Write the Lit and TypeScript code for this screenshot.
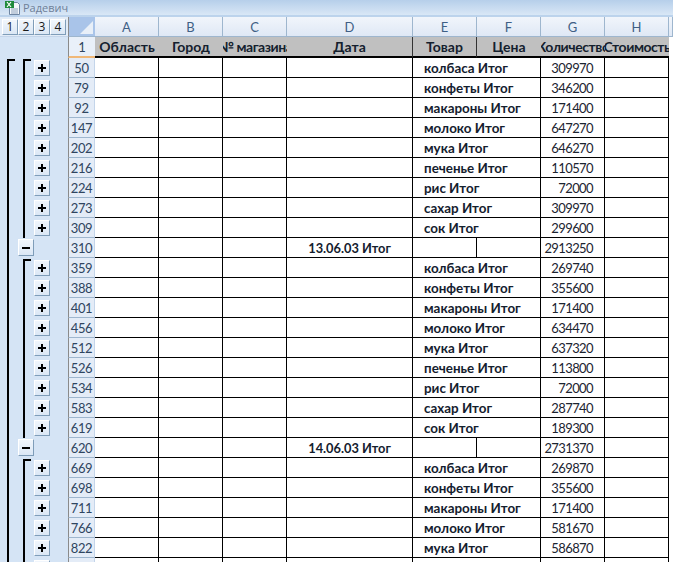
import { LitElement, html, css } from "lit";
import { customElement } from "lit/decorators.js";

type Row = { n: number | ""; item?: string; date?: string; val?: string; first?: boolean };

const items = ["колбаса", "конфеты", "макароны", "молоко", "мука", "печенье", "рис", "сахар", "сок"];
const group = (nums: number[], vals: string[]): Row[] =>
  nums.map((n, i) => ({ n, item: `${items[i]} Итог`, val: vals[i], first: i === 0 }));

const rows: Row[] = [
  ...group([50, 79, 92, 147, 202, 216, 224, 273, 309], ["309970", "346200", "171400", "647270", "646270", "110570", "72000", "309970", "299600"]),
  { n: 310, date: "13.06.03 Итог", val: "2913250" },
  ...group([359, 388, 401, 456, 512, 526, 534, 583, 619], ["269740", "355600", "171400", "634470", "637320", "113800", "72000", "287740", "189300"]),
  { n: 620, date: "14.06.03 Итог", val: "2731370" },
  ...group([669, 698, 711, 766, 822], ["269870", "355600", "171400", "581670", "586870"]),
  { n: "" },
];

const cols = ["A", "B", "C", "D", "E", "F", "G", "H"];
const heads = ["Область", "Город", "№ магазина", "Дата", "Товар", "Цена", "Количество", "Стоимость"];

@customElement("app-root")
export class AppRoot extends LitElement {
  static styles = css`
    :host {
      display: block;
      width: 673px;
      height: 562px;
      overflow: hidden;
      background: #fff;
      font-family: "Lato", "Liberation Sans", sans-serif;
      color: #000;
    }
    .title {
      height: 15px;
      display: flex;
      align-items: center;
      gap: 3px;
      padding-left: 5px;
      background: linear-gradient(#b6cfea, #d9e7f6);
      border-bottom: 2px solid #bcd3ec;
      font: 11px "Open Sans", sans-serif;
      color: #6f8098;
    }
    .title svg { flex: none; margin-top: 1px; }
    .row {
      display: grid;
      grid-template-columns: 68px 27px 64px 64px 64px 126px 64px 64px 64px 64px 4px;
      height: 20px;
    }
    .gutter {
      display: grid;
      grid-template-columns: 7px 11px 5px 11px 16px 18px;
      height: 20px;
      background: #d5e4f5;
    }
    .l1, .l2 {
      grid-row: 1;
      border-left: 2px solid #000;
      box-sizing: border-box;
      height: 20px;
    }
    .l1 { grid-column: 2; }
    .l2 { grid-column: 4; }
    .first { position: relative; height: 19px; margin-top: 1px; }
    .first::after {
      content: "";
      position: absolute;
      left: 0;
      top: 0;
      width: 6px;
      height: 2px;
      background: #000;
    }
    .btn {
      box-sizing: border-box;
      background: linear-gradient(#f1f6fc, #dbe7f5);
      border: 1px solid #fff;
      border-right-color: #7f9db9;
      border-bottom-color: #7f9db9;
      display: flex;
      align-items: center;
      justify-content: center;
      line-height: 1;
    }
    .plus { grid-column: 5; grid-row: 1; width: 16px; height: 16px; margin-top: 2px; }
    .minus { grid-column: 3 / 5; grid-row: 1; width: 16px; height: 17px; margin-top: 1px; }
    .plus svg, .minus svg { display: block; }
    .rh {
      box-sizing: border-box;
      border-left: 1px solid #8a8a8a;
      border-right: 1px solid #c4d5ea;
      border-bottom: 1px solid #9eb6ce;
      background: #e4ecf7;
      color: #2f4560;
      font-size: 13px;
      letter-spacing: -0.4px;
      display: flex;
      align-items: center;
      justify-content: center;
    }
    .c {
      box-sizing: border-box;
      border-right: 1px solid #000;
      border-bottom: 1px solid #000;
      display: flex;
      align-items: center;
      overflow: hidden;
      white-space: nowrap;
    }
    .item {
      grid-column: span 2;
      padding-left: 11px;
      font-size: 13.4px;
      font-weight: 700;
      color: #14202e;
    }
    .num {
      justify-content: flex-end;
      padding-right: 11px;
      font-size: 13px;
      letter-spacing: -0.6px;
      color: #1c2430;
    }
    .total {
      justify-content: center;
      font-size: 12.8px;
      font-weight: 700;
      color: #14202e;
    }
    .hrow { height: 20px; }
    .hgutter {
      background: #e3ecf7;
      border-bottom: 1px solid #c4d5ea;
      box-sizing: border-box;
      display: flex;
      padding: 2px 0 0 2px;
    }
    .lv {
      width: 16px;
      height: 16px;
      font-size: 12px;
      font-family: "Open Sans", sans-serif;
      color: #1a1a1a;
    }
    .corner {
      box-sizing: border-box;
      border-left: 1px solid #8a8a8a;
      border-bottom: 1px solid #9eb6ce;
      background: #a9c4e9;
      display: flex;
      align-items: flex-end;
      justify-content: flex-end;
      padding: 0 2px 2px 0;
    }
    .ch {
      box-sizing: border-box;
      background: linear-gradient(#f1f5fb, #dfe8f5);
      border-right: 1px solid #9eb6ce;
      border-bottom: 1px solid #9eb6ce;
      color: #3f5f85;
      font-size: 13px;
      display: flex;
      align-items: center;
      justify-content: center;
    }
    .trow { height: 21px; }
    .tgutter { background: #d5e4f5; }
    .trh {
      box-sizing: border-box;
      border-left: 1px solid #8a8a8a;
      border-bottom: 2px solid #f0b878;
      background: #e9f0f9;
      color: #2f4560;
      font-size: 13px;
      display: flex;
      align-items: center;
      justify-content: center;
    }
    .th {
      box-sizing: border-box;
      background: #c0c0c0;
      border-bottom: 2px solid #000;
      font-size: 14px;
      font-weight: 700;
      color: #14202e;
      display: flex;
      align-items: center;
      justify-content: center;
      overflow: hidden;
      white-space: nowrap;
    }
    .th span { flex: none; }
    .div { border-right: 1px solid #333; }
    .tight { letter-spacing: -0.45px; }
  `;

  private gutter(r: Row) {
    return html`<div class="gutter">
      <i class="l1 ${r === rows[0] ? "first" : ""}"></i>
      ${r.date
        ? html`<div class="btn minus"><svg width="10" height="2" viewBox="0 0 10 2"><rect width="8" height="2" x="1" fill="#000"/></svg></div>`
        : html`<i class="l2 ${r.first ? "first" : ""}"></i>
            <div class="btn plus"><svg width="10" height="10" viewBox="0 0 10 10"><path d="M4 1h2v3h3v2H6v3H4V6H1V4h3z" fill="#000"/></svg></div>`}
    </div>`;
  }

  private dataRow(r: Row) {
    const cells = r.date
      ? html`<div class="c"></div><div class="c"></div><div class="c"></div>
          <div class="c total">${r.date}</div>
          <div class="c"></div><div class="c"></div>
          <div class="c num">${r.val}</div><div class="c"></div>`
      : html`<div class="c"></div><div class="c"></div><div class="c"></div><div class="c"></div>
          <div class="c item">${r.item ?? ""}</div>
          <div class="c num">${r.val ?? ""}</div><div class="c"></div>`;
    return html`<div class="row">
      ${this.gutter(r)}
      <div class="rh">${r.n}</div>
      ${cells}
      <div></div>
    </div>`;
  }

  render() {
    return html`
      <div class="title">
        <svg width="15" height="14" viewBox="0 0 15 14">
          <path d="M4.5 1.5h8l2 2v10h-10z" fill="#f4f7fb" stroke="#6f86a3"/>
          <path d="M6 8h7M6 10h7M6 12h7" stroke="#8ea3bd"/>
          <rect x="0" y="0" width="9" height="7" fill="#1f8a3c"/>
          <path d="M2 1l4 5M6 1L2 6" stroke="#fff" stroke-width="1.2"/>
        </svg>
        <span>Радевич</span>
      </div>
      <div class="row hrow">
        <div class="hgutter">
          ${[1, 2, 3, 4].map((n) => html`<div class="btn lv">${n}</div>`)}
        </div>
        <div class="corner">
          <svg width="13" height="13" viewBox="0 0 13 13"><path d="M13 0v13H0z" fill="#e8eff8"/></svg>
        </div>
        ${cols.map((c) => html`<div class="ch">${c}</div>`)}
        <div class="ch"></div>
      </div>
      <div class="row trow">
        <div class="tgutter"></div>
        <div class="trh">1</div>
        ${heads.map(
          (h, i) => html`<div class="th ${i === 3 || i === 4 ? "div" : ""} ${i === 2 || i >= 6 ? "tight" : ""}"><span>${h}</span></div>`
        )}
        <div></div>
      </div>
      ${rows.map((r) => this.dataRow(r))}
    `;
  }
}
